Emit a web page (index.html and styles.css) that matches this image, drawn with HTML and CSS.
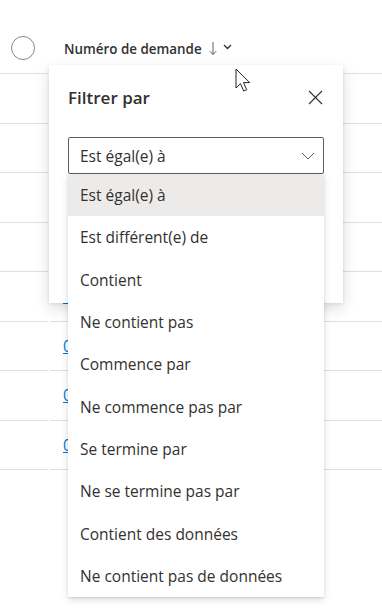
FILE: index.html
```html
<!DOCTYPE html>
<html lang="fr">
<head>
    <meta charset="UTF-8">
    <meta name="viewport" content="width=device-width, initial-scale=1.0">
    <title>Filtrer par</title>
    <link rel="stylesheet" href="styles.css">
</head>
<body>
    <div class="grid">
        <div class="head">
            <div class="cell check"><span class="circle"></span></div>
            <div class="cell title">
                <span>Numéro de demande</span>
                <svg class="sort" width="8" height="15" viewBox="0 0 8 15"><path d="M4 1v12.5M0.8 10.2L4 13.5l3.2-3.3" fill="none" stroke="#605e5c" stroke-width="1"/></svg>
                <svg class="caret" width="9" height="6" viewBox="0 0 9 6"><path d="M1 1l3.5 3.5L8 1" fill="none" stroke="#323130" stroke-width="1.3"/></svg>
            </div>
        </div>
        <div class="row"><div class="cell"></div><div class="cell"></div></div>
        <div class="row"><div class="cell"></div><div class="cell"></div></div>
        <div class="row"><div class="cell"></div><div class="cell"></div></div>
        <div class="row"><div class="cell"></div><div class="cell"></div></div>
        <div class="row"><div class="cell"></div><div class="cell"><a href="#">00012454</a></div></div>
        <div class="row"><div class="cell"></div><div class="cell"><a href="#">00012453</a></div></div>
        <div class="row"><div class="cell"></div><div class="cell"><a href="#">00012452</a></div></div>
        <div class="row"><div class="cell"></div><div class="cell"><a href="#">00012451</a></div></div>
    </div>

    <div class="callout">
        <div class="callout-head">
            <h2>Filtrer par</h2>
            <svg class="close" width="15" height="15" viewBox="0 0 15 15"><path d="M1 1l13 13M14 1L1 14" fill="none" stroke="#323130" stroke-width="1.1"/></svg>
        </div>
        <div class="dropdown">
            <div class="dropdown-box">
                <span>Est égal(e) à</span>
                <svg width="14" height="8" viewBox="0 0 14 8"><path d="M1 1l6 6 6-6" fill="none" stroke="#605e5c" stroke-width="1"/></svg>
            </div>
            <ul class="options">
                <li class="selected">Est égal(e) à</li>
                <li>Est différent(e) de</li>
                <li>Contient</li>
                <li>Ne contient pas</li>
                <li>Commence par</li>
                <li>Ne commence pas par</li>
                <li>Se termine par</li>
                <li>Ne se termine pas par</li>
                <li>Contient des données</li>
                <li>Ne contient pas de données</li>
            </ul>
        </div>
    </div>

    <svg class="cursor" width="16" height="25" viewBox="0 0 16 25"><path d="M1 1v19l4.5-4.3 3.2 7.3 3-1.3-3.2-7.1h6.2z" fill="#fff" stroke="#222" stroke-width="1" stroke-linejoin="round"/></svg>
</body>
</html>
```

FILE: styles.css
```css
* {
    box-sizing: border-box;
}

body {
    margin: 0;
    padding: 0;
    position: relative;
    width: 382px;
    height: 613px;
    overflow: hidden;
    background: #ffffff;
    font-family: "Open Sans", "Noto Sans", sans-serif;
    color: #323130;
}

.head,
.row {
    display: grid;
    grid-template-columns: 48px 1fr;
    column-gap: 2px;
}

.head {
    height: 74px;
}

.row {
    height: 49.5px;
}

.cell {
    display: flex;
    align-items: center;
    border-bottom: 1px solid #e1dfdd;
    padding-left: 13px;
}

.head .cell {
    align-items: flex-end;
    padding-bottom: 13px;
}

.check {
    padding-left: 11px;
}

.circle {
    width: 24px;
    height: 24px;
    border: 1px solid #8a8886;
    border-radius: 50%;
}

.title {
    font-size: 13.4px;
    font-weight: 600;
    padding-left: 14px;
}

.title span {
    line-height: 22px;
}

.sort {
    margin-left: 7px;
    margin-bottom: 4px;
}

.caret {
    margin-left: 6px;
    margin-bottom: 10px;
}

.row a {
    font-size: 15.5px;
    color: #0078d4;
    text-decoration: underline;
}

.callout {
    position: absolute;
    left: 49px;
    top: 65px;
    width: 294px;
    height: 238px;
    padding: 20px 19px;
    background: #ffffff;
    box-shadow: 0 6.4px 14.4px rgba(0, 0, 0, 0.13), 0 1.2px 3.6px rgba(0, 0, 0, 0.11);
}

.callout-head {
    display: flex;
    justify-content: space-between;
    align-items: center;
    height: 24px;
    margin-bottom: 28px;
}

.callout-head h2 {
    margin: 0;
    font-size: 17px;
    font-weight: 600;
}

.close {
    margin-right: 1px;
}

.dropdown {
    position: relative;
}

.dropdown-box {
    display: flex;
    justify-content: space-between;
    align-items: center;
    height: 37px;
    padding: 0 8px 0 11px;
    border: 1px solid #605e5c;
    border-radius: 2px;
    font-size: 15.5px;
}

.options {
    position: absolute;
    left: 0;
    right: 0;
    top: 100%;
    margin: 0;
    padding: 0;
    list-style: none;
    background: #ffffff;
    box-shadow: 0 3.2px 7.2px rgba(0, 0, 0, 0.13), 0 0.6px 1.8px rgba(0, 0, 0, 0.11);
}

.options li {
    display: flex;
    align-items: center;
    height: 42.3px;
    padding-left: 12px;
    font-size: 15.5px;
}

.options li.selected {
    background: #edebe9;
}

.cursor {
    position: absolute;
    left: 235px;
    top: 68px;
}
```
